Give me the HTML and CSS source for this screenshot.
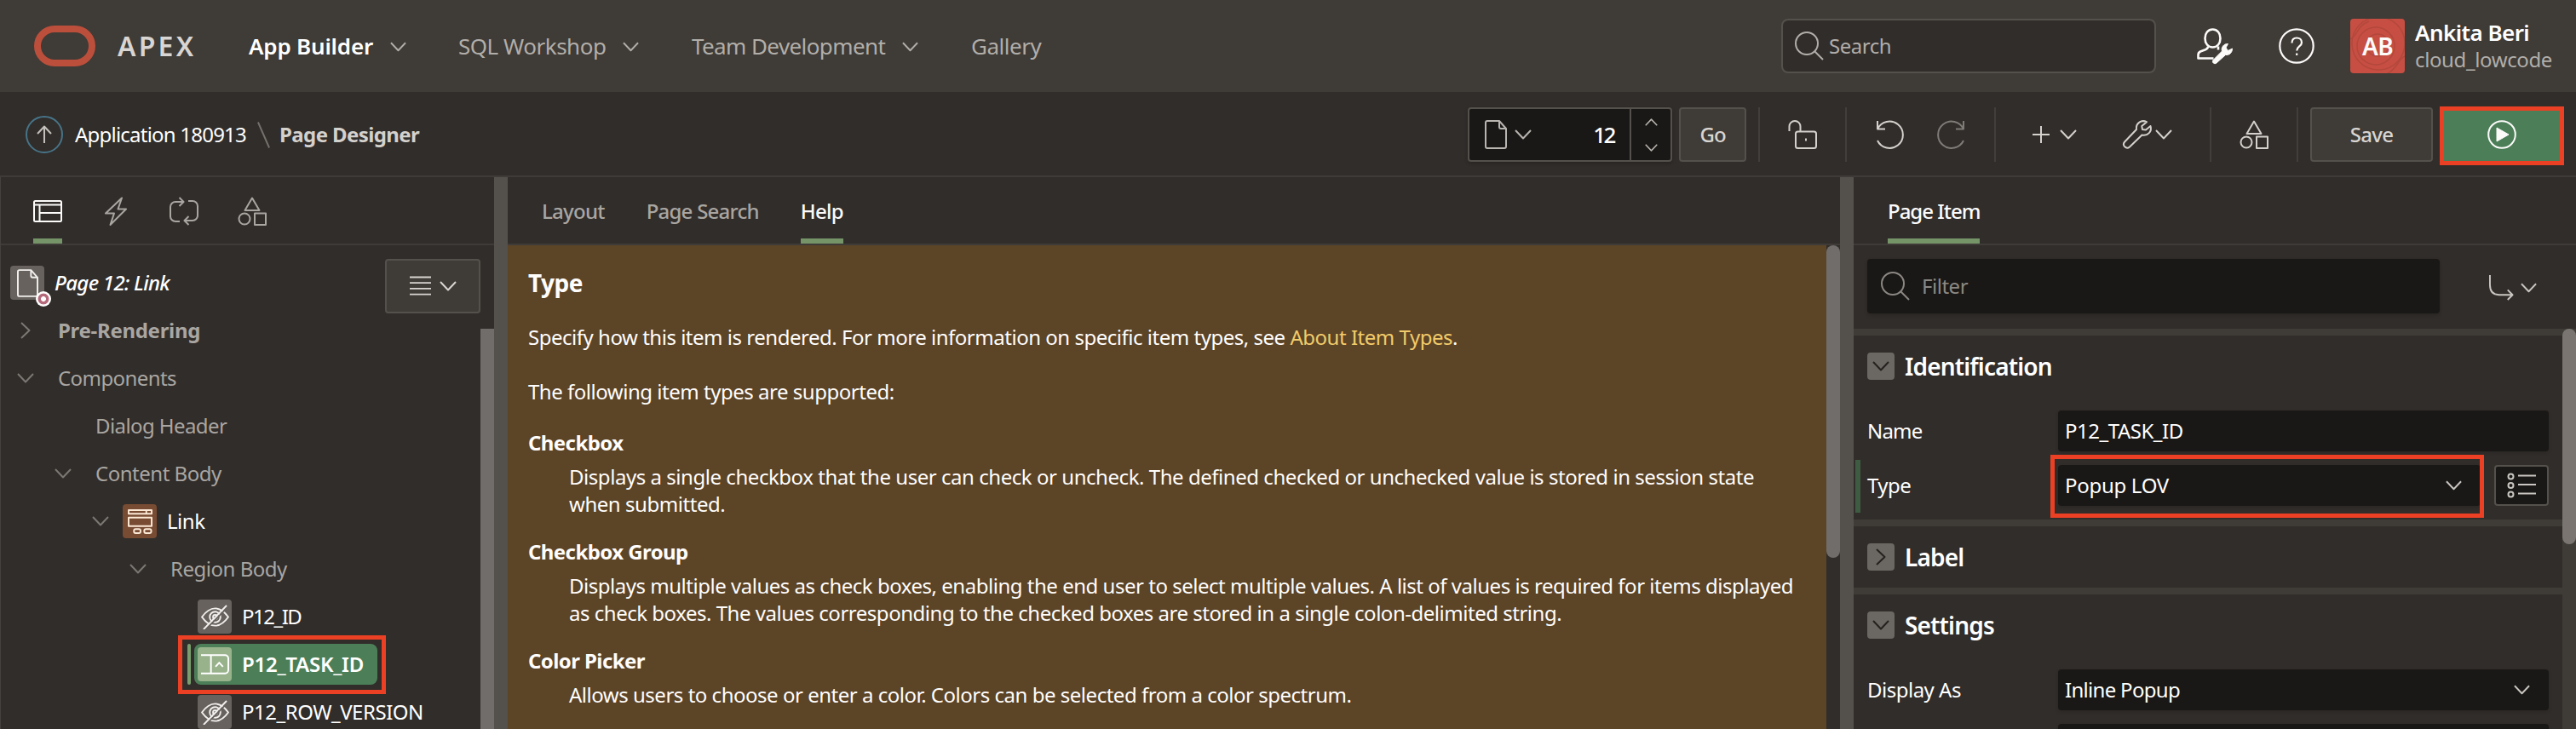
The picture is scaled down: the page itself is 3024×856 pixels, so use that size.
FILE: index.html
```html
<!DOCTYPE html>
<html lang="en">
<head>
<meta charset="utf-8">
<title>Page Designer</title>
<link rel="stylesheet" href="styles.css">
</head>
<body>
<svg class="defs" aria-hidden="true">
  <symbol id="chev" viewBox="0 0 20 12"><path d="M1 1l9 9.500 9-9.500"/></symbol>
  <symbol id="page" viewBox="0 0 26 34"><path d="M3 1h14l8 9v21a2 2 0 0 1-2 2H3a2 2 0 0 1-2-2V3a2 2 0 0 1 2-2zM17 1v7a2 2 0 0 0 2 2h6"/></symbol>
  <symbol id="glass" viewBox="0 0 34 34"><circle cx="14" cy="14" r="13"/><path d="M23 23l10 10"/></symbol>
  <symbol id="shapes" viewBox="0 0 34 34"><path d="M17 1.500l8.500 14.500h-17z"/><circle cx="8" cy="26" r="6.500"/><path d="M20 19.500h13V33H20z"/></symbol>
  <symbol id="eye" viewBox="0 0 34 30"><path d="M1 15C6 8 11 4.500 17 4.500S28 8 33 15c-5 7-10 10.500-16 10.500S6 22 1 15z"/><circle cx="17" cy="15" r="6.500"/><circle cx="17" cy="15" r="2.500"/><path class="cut" d="M5.500 30L33.500 2"/><path d="M3 30L31 1"/></symbol>
</svg>

<header class="header">
  <svg class="logo" viewBox="0 0 72 48"><rect x="4" y="4" width="64" height="40" rx="20"/></svg>
  <span class="brand">APEX</span>
  <nav class="nav">
    <a class="nav-item nav-app">App Builder<svg class="ico chev"><use href="#chev"/></svg></a>
    <a class="nav-item nav-sql">SQL Workshop<svg class="ico chev"><use href="#chev"/></svg></a>
    <a class="nav-item nav-team">Team Development<svg class="ico chev"><use href="#chev"/></svg></a>
    <a class="nav-item nav-gallery">Gallery</a>
  </nav>
  <div class="search"><svg class="ico i34"><use href="#glass"/></svg><span>Search</span></div>
  <svg class="ico admin" viewBox="0 0 42 42"><path d="M18.500 1.500c5.500 0 9 4.500 9 10.500s-3.500 10.500-9 10.500S9.500 18 9.500 12s3.500-10.500 9-10.500z"/><path d="M13 21.500c0 2.500-1 3-3 3.800L4 27.500c-2 1-2.500 2-2.500 4v4h18M25 21.500v4"/><path class="solid" d="M19 37.500l10.500-10.500c-1.500-4 2-9 7-8.500l-2.500 4.500 2.500 3.500 5-2.500c0 5-3.500 8-8 7.500L23 41c-2.500 2-6-.8-4-3.500z"/></svg>
  <svg class="ico help-ico" viewBox="0 0 42 42"><circle cx="21" cy="21" r="19.700"/><path d="M15.500 17.500c0-4 2.500-6 5.700-6s5.800 2 5.800 5.500c0 4.500-5.800 4.500-5.800 9.500M21.200 29.500v2.500"/></svg>
  <div class="avatar"><svg class="waves" viewBox="0 0 64 64"><circle cx="32" cy="31" r="13"/><circle cx="30" cy="32" r="22"/><circle cx="33" cy="29" r="31"/><path d="M0 24c9-4 8-16 22-21M64 44C56 48 54 60 44 64"/></svg><b>AB</b></div>
  <div class="user"><span class="user-name">Ankita Beri</span><span class="user-ws">cloud_lowcode</span></div>
</header>

<div class="toolbar">
  <svg class="ico up" viewBox="0 0 44 44"><circle cx="22" cy="22" r="21"/><path d="M22 32V13M14 21l8-8.500 8 8.500"/></svg>
  <span class="crumb">Application 180913</span>
  <svg class="ico slash" viewBox="0 0 16 34"><path d="M1 1l14 32"/></svg>
  <h1 class="crumb-current">Page Designer</h1>
  <div class="page-picker">
    <div class="picker-main"><svg class="ico page-ico"><use href="#page"/></svg><svg class="ico chev"><use href="#chev"/></svg><span class="page-no">12</span></div>
    <div class="spin"><svg class="ico chev-s flip"><use href="#chev"/></svg><svg class="ico chev-s"><use href="#chev"/></svg></div>
  </div>
  <button class="btn go">Go</button>
  <i class="sep sep-1"></i>
  <svg class="ico i34 lock" viewBox="0 0 34 34"><rect x="9" y="13.500" width="24" height="19.500" rx="2.500"/><path d="M1.500 13V7.500a6.500 6.500 0 0 1 13 0v6M21 21.500v3"/></svg>
  <i class="sep sep-2"></i>
  <svg class="ico i34 undo" viewBox="0 0 34 34"><path d="M2 1v9.500h9M2 10.500A15.700 15.700 0 1 1 2 24"/></svg>
  <svg class="ico i34 redo" viewBox="0 0 34 34"><path d="M32 1v9.500h-9M32 10.500A15.700 15.700 0 1 0 32 24"/></svg>
  <i class="sep sep-3"></i>
  <svg class="ico plus" viewBox="0 0 20 20"><path d="M10 0v20M0 10h20"/></svg>
  <svg class="ico chev chev-plus"><use href="#chev"/></svg>
  <svg class="ico i34 wrench" viewBox="0 0 34 34"><path d="M28 2.200c-6-3-13 1-12 8.800L2.200 25.500c-3.500 4 1.800 9.500 5.800 6L22.500 17.500c7 1.500 12-4.500 10-10.500L27 11.500l-4-.5-.7-4z"/><path d="M6 28.500h.01"/></svg>
  <svg class="ico chev chev-wrench"><use href="#chev"/></svg>
  <i class="sep sep-4"></i>
  <svg class="ico i34 shared"><use href="#shapes"/></svg>
  <i class="sep sep-5"></i>
  <button class="btn save">Save</button>
  <div class="run"><svg class="ico i34" viewBox="0 0 34 34"><circle cx="17" cy="17" r="15.800"/><path class="solid" d="M11 9v16l14-8z"/></svg></div>
</div>

<main class="main">
  <section class="left">
    <div class="tabs tabs-left">
      <span class="tab on"><svg class="ico i34" viewBox="0 0 34 34"><rect x="1" y="5" width="32" height="24" rx="1.500"/><path d="M1 9.500h32M7.500 9.500V29M7.500 19H33"/></svg></span>
      <span class="tab"><svg class="ico i34" viewBox="0 0 34 34"><path d="M24 1.500L5 19.500h10L10.500 33 29 14.500H19.500z"/></svg></span>
      <span class="tab"><svg class="ico i34" viewBox="0 0 34 34"><path d="M12 29H7a6 6 0 0 1-6-6V12a6 6 0 0 1 6-6h9M11.500 1l5 5-5 5M22 5h5a6 6 0 0 1 6 6v11a6 6 0 0 1-6 6h-9M22.500 23l-5 5 5 5"/></svg></span>
      <span class="tab"><svg class="ico i34"><use href="#shapes"/></svg></span>
    </div>
    <div class="tree-wrap">
      <div class="tree">
        <div class="row root"><span class="badge gray"><svg class="ico page-ico"><use href="#page"/></svg><i class="dot"></i></span><em class="t-page">Page 12: Link</em>
          <div class="btn menu-btn"><svg class="ico lines" viewBox="0 0 26 24"><path d="M0 1h26M0 8h26M0 15h26M0 22h26"/></svg><svg class="ico chev"><use href="#chev"/></svg></div>
        </div>
        <div class="row l0"><svg class="ico chev point"><use href="#chev"/></svg><b class="plain t-pre">Pre-Rendering</b></div>
        <div class="row l0"><svg class="ico chev"><use href="#chev"/></svg><span class="plain t-comp">Components</span></div>
        <div class="row l1"><i class="chev"></i><span class="plain t-comp">Dialog Header</span></div>
        <div class="row l1"><svg class="ico chev"><use href="#chev"/></svg><span class="plain">Content Body</span></div>
        <div class="row l2"><svg class="ico chev"><use href="#chev"/></svg><span class="badge brown"><svg class="ico region" viewBox="0 0 30 30"><path d="M1 1h28v4.500H1zM22.500 1v4.500M1 10h28v10.500H1z"/><rect x="7.500" y="24" width="8" height="5" rx="2"/><rect x="20" y="24" width="8.500" height="5" rx="2"/></svg></span><span class="label">Link</span></div>
        <div class="row l3"><svg class="ico chev"><use href="#chev"/></svg><span class="plain">Region Body</span></div>
        <div class="row l4"><i class="chev"></i><span class="badge gray"><svg class="ico eye"><use href="#eye"/></svg></span><span class="label t-id">P12_ID</span></div>
        <div class="row l4"><i class="chev"></i>
          <div class="selected"><span class="badge light"><svg class="ico lov" viewBox="0 0 34 24"><path d="M0 1h29a4 4 0 0 1 4 4v14a4 4 0 0 1-4 4H0M12 1v22M17.500 15l4.500-5 4.500 5"/></svg></span><b class="label t-task">P12_TASK_ID</b><i class="mark mark-node"></i></div>
        </div>
        <div class="row l4"><i class="chev"></i><span class="badge gray"><svg class="ico eye"><use href="#eye"/></svg></span><span class="label t-row">P12_ROW_VERSION</span></div>
      </div>
      <i class="thumb-left"></i>
    </div>
  </section>
  <i class="splitter"></i>
  <section class="center">
    <div class="tabs tabs-center"><span class="tab">Layout</span><span class="tab">Page Search</span><span class="tab on">Help</span></div>
    <div class="help-wrap">
      <article class="help">
        <h2>Type</h2>
        <p>Specify how this item is rendered. For more information on specific item types, see <a>About Item Types</a>.</p>
        <p>The following item types are supported:</p>
        <dl>
          <dt>Checkbox</dt>
          <dd class="loose">Displays a single checkbox that the user can check or uncheck. The defined checked or unchecked value is stored in session state<br>when submitted.</dd>
          <dt>Checkbox Group</dt>
          <dd>Displays multiple values as check boxes, enabling the end user to select multiple values. A list of values is required for items displayed<br>as check boxes. The values corresponding to the checked boxes are stored in a single colon-delimited string.</dd>
          <dt>Color Picker</dt>
          <dd>Allows users to choose or enter a color. Colors can be selected from a color spectrum.</dd>
        </dl>
      </article>
      <div class="track"><i class="thumb thumb-help"></i></div>
    </div>
  </section>
  <i class="splitter"></i>
  <section class="right">
    <div class="tabs tabs-right"><span class="tab on t-item">Page Item</span></div>
    <div class="filter-row">
      <div class="filter"><svg class="ico i34"><use href="#glass"/></svg><span>Filter</span></div>
      <svg class="ico goto" viewBox="0 0 30 32"><path d="M1 1v12c0 8 4 12 11 12h16M22.500 19l6 6-6 6"/></svg>
      <svg class="ico chev"><use href="#chev"/></svg>
    </div>
    <div class="props-wrap">
      <div class="props">
        <div class="group">
          <h3><span class="toggle"><svg class="ico chev"><use href="#chev"/></svg></span>Identification</h3>
          <div class="fields">
            <div class="field"><label class="t-name">Name</label><div class="input">P12_TASK_ID</div></div>
            <div class="field changed"><label>Type</label><div class="input select t-lov">Popup LOV<svg class="ico chev"><use href="#chev"/></svg><i class="mark mark-type"></i></div>
              <div class="list-btn"><svg class="ico" viewBox="0 0 34 30" width="34" height="30"><circle cx="4.500" cy="4.500" r="3"/><circle cx="4.500" cy="15" r="3"/><circle cx="4.500" cy="25.500" r="3"/><path d="M13 3.500h21M13 14h21M13 24.500h21"/></svg></div></div>
          </div>
        </div>
        <div class="group">
          <h3><span class="toggle"><svg class="ico chev point"><use href="#chev"/></svg></span>Label</h3>
        </div>
        <div class="group">
          <h3><span class="toggle"><svg class="ico chev"><use href="#chev"/></svg></span>Settings</h3>
          <div class="fields">
            <div class="field"><label>Display As</label><div class="input select t-inline">Inline Popup<svg class="ico chev"><use href="#chev"/></svg></div></div>
            <div class="field"><label></label><div class="input"></div></div>
          </div>
        </div>
      </div>
      <div class="track track-props"><i class="thumb thumb-props"></i></div>
    </div>
  </section>
</main>
</body>
</html>
```
FILE: styles.css
```css
* { box-sizing: border-box; }
body {
  margin: 0; width: 3024px; height: 856px; overflow: hidden;
  display: flex; flex-direction: column;
  background: #312d2a; color: #fcfbfa;
  font: 24px/32px "Noto Sans", sans-serif; letter-spacing: -0.48px;
}
.defs { position: absolute; width: 0; height: 0; }
i { display: block; }
.ico { display: block; flex: none; fill: none; stroke: currentColor; stroke-width: 2; stroke-linejoin: round; overflow: visible; }
.ico .solid { fill: currentColor; stroke-width: 1; }
.i34 { width: 34px; height: 34px; }
.chev { width: 20px; height: 12px; flex: none; }
.chev-s { width: 15px; height: 9px; }
.flip { transform: rotate(180deg); }
.point { transform: rotate(-90deg); }
.page-ico { width: 26px; height: 34px; }

/* header */
.header { height: 108px; flex: none; display: flex; align-items: center; background: #3f3b36; padding-left: 40px; }
.logo { width: 72px; height: 48px; fill: none; stroke: #bb4f3b; stroke-width: 8; flex: none; }
.brand { margin-left: 26px; width: 154px; font-size: 32px; font-weight: 600; letter-spacing: 3.2px; color: #d8d5d2; }
.nav { display: flex; color: #b1aeaa; font-size: 26px; }
.nav-item { display: flex; align-items: center; white-space: nowrap; }
.nav-item .chev { margin: 2px 0 0 20px; color: #b1aeaa; width: 19px; }
.nav-app { width: 246px; font-weight: 600; letter-spacing: -0.18px; color: #fff; }
.nav-sql { width: 274px; }
.nav-team { width: 328px; letter-spacing: -0.6px; }
.search { margin-left: auto; width: 440px; height: 64px; border: 2px solid #54504b; border-radius: 8px; background: #312d2a; display: flex; align-items: center; gap: 6px; padding-left: 14px; color: #b1aeaa; }
.admin { width: 42px; height: 42px; margin-left: 48px; stroke-width: 2.6; }
.help-ico { width: 42px; height: 42px; margin-left: 54px; stroke-width: 2.2; }
.avatar { width: 64px; height: 64px; margin-left: 42px; border-radius: 4px; background: #c74e42; position: relative; display: grid; place-items: center; font-size: 28px; letter-spacing: -0.6px; overflow: hidden; }
.avatar b { position: relative; font-weight: 600; }
.waves { position: absolute; inset: 0; width: 64px; height: 64px; fill: none; stroke: #b3483c; stroke-width: 1.5; }
.user { margin-left: 12px; width: 189px; display: flex; flex-direction: column; }
.user-name { font-size: 26px; font-weight: 600; letter-spacing: -0.55px; color: #fff; }
.user-ws { color: #b1aeaa; letter-spacing: -0.38px; }

/* toolbar */
.toolbar { height: 100px; flex: none; display: flex; align-items: center; border-bottom: 2px solid #3f3b38; padding: 2px 0 0 30px; color: #d4d1cd; }
.up { width: 44px; height: 44px; color: #c4c1bd; }
.up circle { stroke: #477488; }
.crumb { margin-left: 14px; width: 214px; color: #fff; letter-spacing: -0.78px; white-space: nowrap; }
.slash { width: 15px; height: 33px; color: #75716d; }
.crumb-current { margin: 0 0 0 11px; font-size: 24px; font-weight: 700; letter-spacing: -0.6px; }
.page-picker { margin-left: auto; width: 240px; height: 64px; display: flex; border: 2px solid #54504b; border-radius: 4px; background: #1a1816; color: #b8b5b1; box-shadow: 0 2px 4px rgba(0,0,0,.2); }
.picker-main { flex: 1; display: flex; align-items: center; padding: 0 18px 0 18px; }
.picker-main .chev { margin-left: 9px; }
.page-no { margin-left: auto; font-size: 26px; font-weight: 500; letter-spacing: -2.5px; color: #fff; }
.spin { width: 48px; border-left: 2px solid #54504b; display: flex; flex-direction: column; align-items: center; justify-content: center; gap: 21px; }
.btn { height: 64px; border: 2px solid #54504b; border-radius: 4px; background: #3f3b36; color: #d8d5d2; font: inherit; letter-spacing: inherit; padding: 0; display: flex; align-items: center; justify-content: center; flex: none; }
.go { width: 79px; margin-left: 8px; font-weight: 500; letter-spacing: -1px; }
.save { width: 144px; margin-left: 14px; font-weight: 500; letter-spacing: -0.7px; }
.sep { width: 2px; height: 64px; background: #423e3b; flex: none; }
.sep-1 { margin-left: 14px; }
.lock { margin-left: 33px; }
.sep-2 { margin-left: 33px; }
.undo { margin-left: 34px; }
.redo { margin-left: 37px; color: #7f7b77; }
.sep-3 { margin-left: 34px; }
.plus { width: 20px; height: 20px; margin-left: 43px; }
.chev-plus { margin-left: 12px; }
.wrench { margin-left: 54px; }
.chev-wrench { margin-left: 4px; }
.sep-4 { margin-left: 44px; }
.shared { margin-left: 33px; }
.sep-5 { margin-left: 33px; }
.run { width: 146px; height: 69px; margin: 3px 14px 0 8px; border: 5px solid #ec4025; background: #4c7f58; color: #fcfbfa; display: grid; place-items: center; padding-bottom: 3px; }

/* panels */
.main { flex: 1; min-height: 0; display: flex; }
.splitter { width: 16px; background: #54504c; }
.left, .center, .right { display: flex; flex-direction: column; min-width: 0; }
.left { width: 580px; border-left: 1px solid #45413e; }
.center { width: 1564px; }
.right { width: 848px; }
.tabs { height: 80px; flex: none; display: flex; border-bottom: 2px solid #3f3b38; color: #a9a6a2; }
.tab { height: 78px; display: flex; align-items: center; border-bottom: 6px solid transparent; padding-top: 8px; white-space: nowrap; }
.tab.on { color: #fcfbfa; border-color: #759568; }
.tabs-left { padding-left: 38px; gap: 46px; }
.tabs-left .tab { width: 34px; }
.tabs-center { padding-left: 40px; gap: 49px; font-weight: 500; letter-spacing: -0.75px; }
.tabs-right { padding-left: 40px; font-weight: 500; }
.t-item { letter-spacing: -1px; }

/* tree */
.tree-wrap { flex: 1; min-height: 0; display: flex; padding-top: 16px; position: relative; }
.tree { width: 579px; height: 552px; overflow: hidden; }
.row { height: 56px; display: flex; align-items: center; white-space: nowrap; }
.row > .chev { color: #7b7773; margin-right: 16px; }
.root { padding-left: 11px; color: #fff; }
.root em { margin-left: 12px; font-weight: 500; letter-spacing: -0.7px; }
.menu-btn { width: 112px; margin: 0 16px 0 auto; align-self: flex-start; gap: 10px; }
.lines { width: 25px; height: 24px; }
.l0 { padding-left: 19px; }
.l1 { padding-left: 63px; }
.l2 { padding-left: 107px; }
.l3 { padding-left: 151px; }
.l4 { padding-left: 195px; }
.plain { margin-left: 12px; color: #a9a6a2; }
.t-pre { letter-spacing: -0.3px; }
.t-comp { letter-spacing: -0.58px; }
.t-row { letter-spacing: -0.48px; }
.t-id { letter-spacing: -1.5px; }
.t-task { letter-spacing: -0.25px; font-weight: 600; }
.label { margin-left: 12px; color: #fff; }
.badge { width: 40px; height: 40px; border-radius: 4px; display: grid; place-items: center; position: relative; flex: none; }
.gray { background: #67625e; color: #f1efed; }
.brown { background: #784b33; color: #fbe9d6; }
.light { background: #98b28c; color: #fff; }
.root .badge .ico { width: 25px; height: 33px; }
.dot { position: absolute; right: -8px; bottom: -8px; width: 18px; height: 18px; border-radius: 50%; background: radial-gradient(circle, #fff 0 2.6px, #b56a7c 3.3px 6px, #fff 6.8px); }
.region { width: 29px; height: 29px; }
.eye { width: 33px; height: 29px; }
.cut { stroke: #67625e; }
.lov { width: 33px; height: 24px; }
.selected { position: relative; height: 48px; width: 215px; margin-left: -4px; padding-left: 4px; border-radius: 8px; background: #4c7f58; display: flex; align-items: center; }
.selected::before { content: ""; position: absolute; left: -8px; top: 0; width: 4px; height: 48px; border-radius: 2px; background: #7a9d6d; }
.mark { position: absolute; border: 5px solid #ec4025; }
.mark-node { left: -19px; top: -10px; width: 244px; height: 69px; }
.thumb-left { position: absolute; right: 0; top: 98px; bottom: 0; width: 16px; background: #716d6a; }

/* help */
.help-wrap { flex: 1; min-height: 0; display: flex; }
.help { width: 1548px; background: #5c4427; padding: 26px 24px 0; white-space: nowrap; overflow: hidden; color: #fffdfb; }
.help h2 { margin: 0 0 30px; font-size: 28px; line-height: 36px; letter-spacing: -0.5px; }
.help p { margin: 0 0 32px; }
.help a { color: #f1cb6a; }
.help dl { margin: -4px 0 0; }
.help dt { font-weight: 700; letter-spacing: -0.58px; margin-bottom: 8px; }
.help dd { margin: 0 0 24px 48px; }
.help .loose { letter-spacing: -0.455px; }
.track { width: 16px; flex: none; }
.thumb { width: 16px; border-radius: 8px; background: #716d6a; }
.thumb-help { height: 367px; }

/* property editor */
.filter-row { height: 98px; flex: none; display: flex; align-items: flex-start; padding: 16px 0 0 16px; color: #c9c6c2; }
.filter { width: 672px; height: 64px; border-radius: 4px; background: #1a1816; display: flex; align-items: center; gap: 14px; padding-left: 16px; color: #8b8884; box-shadow: 0 2px 4px rgba(0,0,0,.2); }
.goto { width: 29px; height: 31px; margin: 18px 8px 0 58px; }
.filter-row > .chev { margin-top: 28px; width: 19px; }
.props-wrap { flex: 1; min-height: 0; display: flex; overflow: hidden; }
.props { width: 832px; }
.group { border-top: 8px solid #3f3b36; }
.group h3 { margin: 0; height: 72px; padding-left: 16px; display: flex; align-items: center; gap: 12px; font-size: 28px; font-weight: 600; letter-spacing: -0.85px; color: #fff; }
.toggle { width: 32px; height: 32px; border-radius: 4px; background: #6b6762; color: #24211f; display: grid; place-items: center; }
.fields { padding: 8px 0; }
.field { height: 64px; display: flex; align-items: center; padding: 0 16px; position: relative; color: #fff; }
.field label { width: 224px; letter-spacing: -0.5px; }
.field .t-name { letter-spacing: -0.8px; }
.input { flex: 1; height: 48px; border-radius: 4px; background: #1a1816; display: flex; align-items: center; justify-content: space-between; padding: 0 22px 0 8px; position: relative; box-shadow: 0 2px 4px rgba(0,0,0,.15); }
.input .chev { color: #c9c6c2; width: 19px; }
.t-lov { letter-spacing: -0.3px; }
.t-inline { letter-spacing: -0.7px; }
.changed::before { content: ""; position: absolute; left: 2px; top: 2px; width: 6px; height: 62px; background: #3e5c41; }
.list-btn { width: 64px; height: 48px; margin-left: 16px; border: 2px solid #54504b; border-radius: 4px; background: #1a1816; color: #c9c6c2; display: grid; place-items: center; }
.mark-type { left: -9px; top: -12px; width: 509px; height: 74px; }
.track-props { background: #3f3b36; }
.thumb-props { height: 253px; background: #7a7571; }
```
